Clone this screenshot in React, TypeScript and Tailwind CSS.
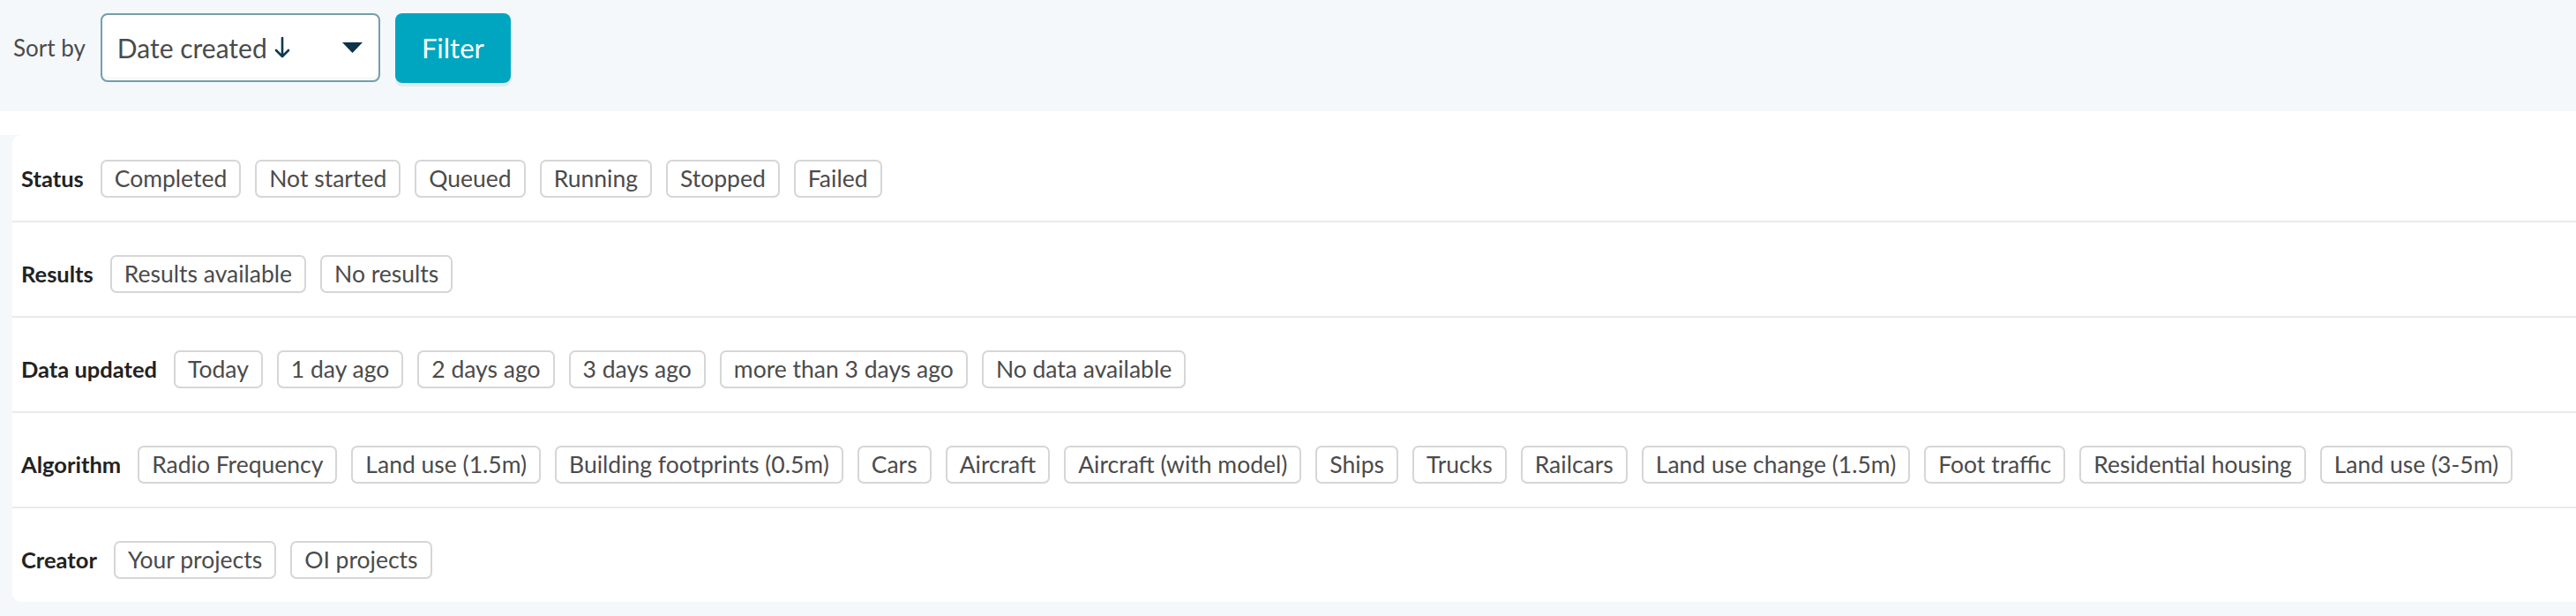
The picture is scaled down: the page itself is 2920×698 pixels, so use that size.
import React from "react";

const font = "font-['Source_Sans_Pro','Lato',sans-serif]";

const groups: Array<{ label: string; options: string[] }> = [
  { label: "Status", options: ["Completed", "Not started", "Queued", "Running", "Stopped", "Failed"] },
  { label: "Results", options: ["Results available", "No results"] },
  {
    label: "Data updated",
    options: ["Today", "1 day ago", "2 days ago", "3 days ago", "more than 3 days ago", "No data available"],
  },
  {
    label: "Algorithm",
    options: [
      "Radio Frequency",
      "Land use (1.5m)",
      "Building footprints (0.5m)",
      "Cars",
      "Aircraft",
      "Aircraft (with model)",
      "Ships",
      "Trucks",
      "Railcars",
      "Land use change (1.5m)",
      "Foot traffic",
      "Residential housing",
      "Land use (3-5m)",
    ],
  },
  { label: "Creator", options: ["Your projects", "OI projects"] },
];

function Chip({ text }: { text: string }) {
  return (
    <button className="h-[43px] flex items-center px-[14px] border-2 border-[#d6d6d6] rounded-[7px] bg-white text-[26.5px] text-[#4b4b4b] leading-none whitespace-nowrap">
      {text}
    </button>
  );
}

export default function App() {
  return (
    <div className={`${font} w-full min-h-[698px] bg-[#f4f8fb]`}>
      <div className="h-[126px] flex items-start gap-[17px] pl-[15px] pt-[15px]">
        <span className="h-[78px] flex items-center text-[26px] text-[#4b4b4b]">Sort by</span>
        <div className="w-[317px] h-[78px] flex items-center justify-between pl-[17px] pr-[18px] bg-white border-2 border-[#739fa9] rounded-[8px] shadow-[inset_0_-4px_0_#f6f8f9]">
          <span className="text-[30px] text-[#4b4b4b] flex items-center gap-[8px]">
            Date created
            <svg width="18" height="26" viewBox="0 0 18 26" fill="none" stroke="#0e3a50" strokeWidth="2.6" strokeLinecap="round" strokeLinejoin="round">
              <path d="M9 2v21M2 16l7 7 7-7" />
            </svg>
          </span>
          <svg width="23" height="12" viewBox="0 0 23 12">
            <path d="M0 0h23L11.5 12z" fill="#0c3349" />
          </svg>
        </div>
        <button className="w-[131px] h-[79px] flex items-center justify-center bg-[#00a6c0] rounded-[8px] text-white text-[31px] shadow-[0_4px_0_#e4e9ec]">
          Filter
        </button>
      </div>
      <div className="h-[27px] bg-white" />
      <div className="pl-[14px]">
        <div className="bg-white rounded-l-[10px]">
          {groups.map((g, i) => (
            <div
              key={g.label}
              className={`flex items-center pl-[10px] ${i === 0 ? "pt-[28px]" : "pt-[37px]"} pb-[26px] ${
                i < groups.length - 1 ? "border-b-2 border-[#e7ebeb]" : ""
              }`}
            >
              <span className="mr-[19px] text-[25.5px] font-bold text-[#222222] whitespace-nowrap">{g.label}</span>
              <div className="flex items-center gap-[16px]">
                {g.options.map((o) => (
                  <Chip key={o} text={o} />
                ))}
              </div>
            </div>
          ))}
        </div>
      </div>
    </div>
  );
}
